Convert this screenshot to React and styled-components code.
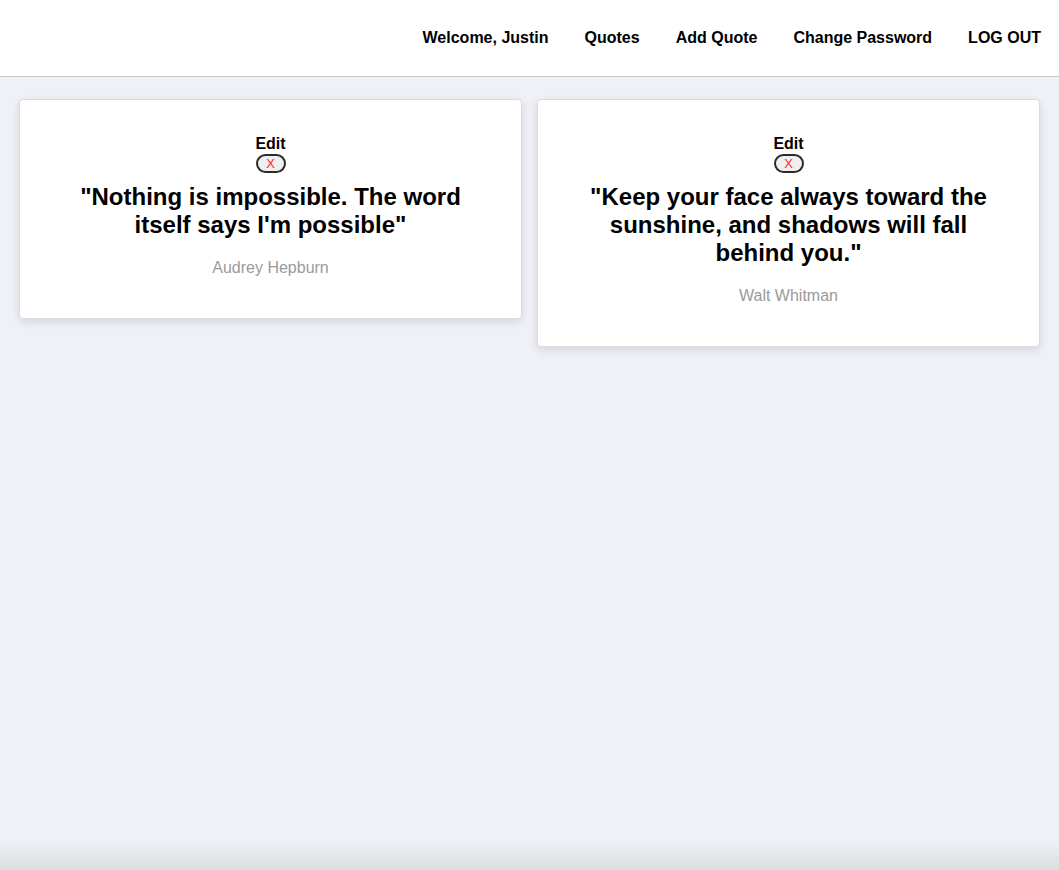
import React from "react";
import styled, { createGlobalStyle } from "styled-components";

const GlobalStyle = createGlobalStyle`
  html, body {
    margin: 0;
    padding: 0;
  }
  body {
    min-height: 100vh;
    font-family: "Liberation Sans", Arial, Helvetica, sans-serif;
    background: linear-gradient(to bottom, #f0f1f6 calc(100% - 30px), #dcdde1 100%);
    background-attachment: fixed;
  }
`;

const Header = styled.header`
  height: 77px;
  box-sizing: border-box;
  background-color: white;
  border-bottom: 1px solid #c9c9cc;
  display: flex;
  justify-content: flex-end;
  align-items: center;
  padding: 0 18px 0 0;
`;

const Nav = styled.nav`
  display: flex;
  gap: 36px;
`;

const NavLink = styled.a`
  color: black;
  font-weight: bold;
  font-size: 16px;
  text-decoration: none;
  cursor: pointer;
`;

const Grid = styled.main`
  display: grid;
  grid-template-columns: 1fr 1fr;
  gap: 15px;
  padding: 22px 19px 0 19px;
  align-items: start;
`;

const Card = styled.div`
  background-color: white;
  border: 1px solid #dcdce0;
  border-radius: 4px;
  box-shadow: 0 3px 10px rgba(0, 0, 0, 0.12);
  padding: 35px 40px 41px;
  display: flex;
  flex-direction: column;
  align-items: center;
  text-align: center;
`;

const EditLink = styled.a`
  font-weight: bold;
  font-size: 16px;
  line-height: 18px;
  color: black;
  cursor: pointer;
`;

const DeleteButton = styled.button`
  margin-top: 1px;
  width: 30px;
  height: 19px;
  padding: 0;
  border: 2px solid #2b2b2b;
  border-radius: 10px;
  background-color: #efefef;
  color: #ff2a1a;
  font-family: "Liberation Sans", Arial, sans-serif;
  font-size: 13px;
  line-height: 14px;
  cursor: pointer;
`;

const QuoteText = styled.h2`
  margin: 10px 0 0;
  font-size: 24px;
  line-height: 28px;
  font-weight: bold;
  color: black;
`;

const Author = styled.p`
  margin: 20px 0 0;
  font-size: 16px;
  line-height: 18px;
  color: #9a9a9a;
`;

const quotes = [
  { id: 1, text: "Nothing is impossible. The word itself says I'm possible", author: "Audrey Hepburn" },
  { id: 2, text: "Keep your face always toward the sunshine, and shadows will fall behind you.", author: "Walt Whitman" },
];

const App = () => {
  return <>
    <GlobalStyle />
    <Header>
      <Nav>
        <NavLink>Welcome, Justin</NavLink>
        <NavLink>Quotes</NavLink>
        <NavLink>Add Quote</NavLink>
        <NavLink>Change Password</NavLink>
        <NavLink>LOG OUT</NavLink>
      </Nav>
    </Header>
    <Grid>
      {quotes.map(q => (
        <Card key={q.id}>
          <EditLink>Edit</EditLink>
          <DeleteButton>X</DeleteButton>
          <QuoteText>"{q.text}"</QuoteText>
          <Author>{q.author}</Author>
        </Card>
      ))}
    </Grid>
  </>
}

export default App;
